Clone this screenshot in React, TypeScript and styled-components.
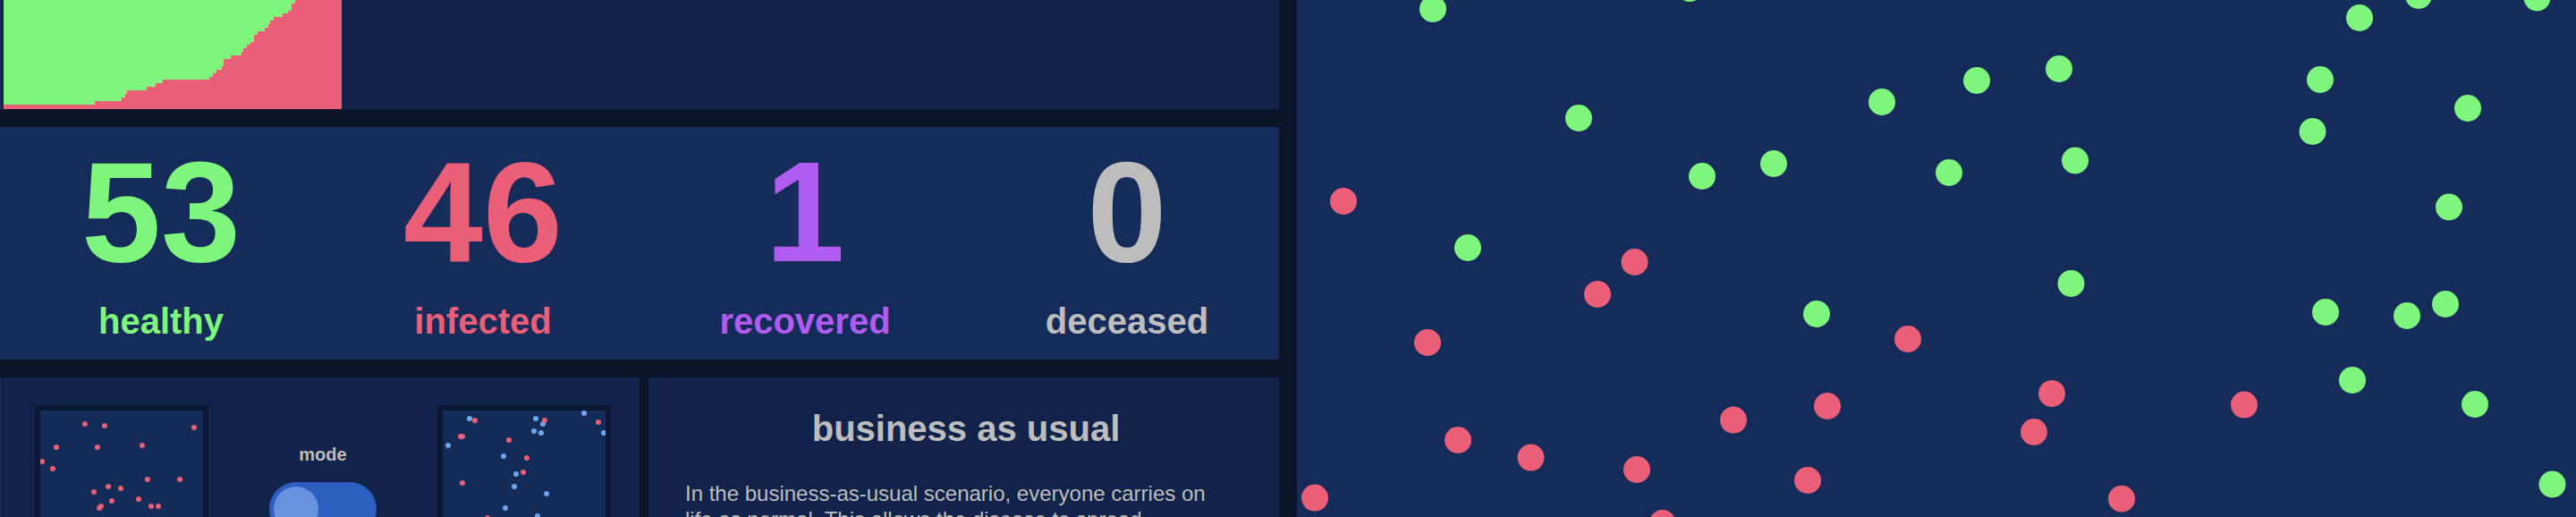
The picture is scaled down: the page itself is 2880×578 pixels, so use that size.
import React from "react";
import styled, { createGlobalStyle } from "styled-components";

const GREEN = "#7ef57d";
const RED = "#ea5e77";
const PURPLE = "#b15cf1";
const GREY = "#bdbdbd";
const BLUE = "#6ba7f1";

const GlobalStyle = createGlobalStyle`
  html, body {
    margin: 0;
    padding: 0;
    background: #0a1529;
    overflow: hidden;
  }
  body {
    font-family: "Liberation Sans", Arial, Helvetica, sans-serif;
  }
  * { box-sizing: border-box; }
`;

const Page = styled.div`
  display: grid;
  grid-template-columns: 1430px 1430px;
  column-gap: 20px;
  width: 2880px;
  height: 578px;
  overflow: hidden;
  background: #0a1529;
`;

const LeftColumn = styled.div`
  display: flex;
  flex-direction: column;
  gap: 20px;
  min-height: 0;
`;

const ChartCard = styled.section`
  flex: none;
  height: 122px;
  background: #11234a;
  display: flex;
  align-items: flex-end;
  padding-left: 3px;
  border-left: 1px solid #1a2d5c;
`;

const ChartSvg = styled.svg`
  display: block;
`;

const StatsPanel = styled.section`
  flex: none;
  height: 260px;
  background: #152b59;
  display: grid;
  grid-template-columns: repeat(4, 360px);
  padding-top: 15px;
`;

const Stat = styled.div<{ $color: string }>`
  display: flex;
  flex-direction: column;
  align-items: center;
  gap: 21.5px;
  color: ${(p) => p.$color};
`;

const StatValue = styled.div`
  font-size: 160px;
  font-weight: 700;
  line-height: 1;
`;

const StatLabel = styled.div`
  font-size: 40px;
  font-weight: 700;
  line-height: 1;
`;

const BottomRow = styled.div`
  flex: none;
  height: 400px;
  display: grid;
  grid-template-columns: 715px 705px;
  column-gap: 10px;
`;

const ModeCard = styled.section`
  background: #11234a;
  display: flex;
  align-items: flex-start;
  gap: 68px;
  padding: 31px 0 0 38px;
  border-left: 1px solid #1a2d5c;
`;

const MiniCanvas = styled.div`
  flex: none;
  width: 194px;
  height: 194px;
  border: 6px solid #0b1735;
  background: #142a57;
  overflow: hidden;
`;

const ModeControl = styled.div`
  margin-top: 45px;
  width: 120px;
  display: flex;
  flex-direction: column;
  align-items: center;
  gap: 21px;
`;

const ModeLabel = styled.div`
  font-size: 20px;
  font-weight: 700;
  line-height: 1;
  color: ${GREY};
`;

const Toggle = styled.button`
  width: 120px;
  height: 60px;
  border-radius: 30px;
  border: none;
  background: #2c5fbf;
  padding: 5px;
  display: flex;
  justify-content: flex-start;
  cursor: pointer;
`;

const Knob = styled.span`
  width: 50px;
  height: 50px;
  border-radius: 50%;
  background: #6891e0;
`;

const ScenarioCard = styled.section`
  background: #11234a;
  padding: 37px 36px 0 41px;
`;

const ScenarioTitle = styled.h2`
  margin: 0;
  text-align: center;
  font-size: 40px;
  font-weight: 700;
  line-height: 1;
  color: ${GREY};
`;

const ScenarioText = styled.p`
  margin: 38px 0 0;
  max-width: 600px;
  font-size: 24px;
  line-height: 29px;
  color: ${GREY};
`;

const Canvas = styled.section`
  background: #152b59;
  overflow: hidden;
`;

// stepped area chart (red infected below, green healthy above)
const steps: [number, number][] = [
  [3, 117], [105, 113], [135, 109], [139, 105], [141, 101], [163, 97], [173, 93],
  [181, 89], [233, 86], [237, 82], [241, 78], [247, 74], [249, 66], [257, 62],
  [269, 58], [271, 54], [275, 50], [279, 47], [283, 39], [287, 35], [295, 31],
  [299, 27], [301, 23], [305, 19], [315, 15], [321, 12], [325, 4], [329, 0],
];
const buildRedPath = () => {
  let d = `M0 122`;
  steps.forEach(([x, y], i) => {
    const x0 = x - 3;
    const x1 = (i + 1 < steps.length ? steps[i + 1][0] : 381) - 3;
    d += ` L${x0} ${y} L${x1} ${y}`;
  });
  d += ` L378 122 Z`;
  return d;
};

const AreaChart = () => (
  <ChartSvg width={378} height={122} viewBox="0 0 378 122">
    <rect x={0} y={0} width={378} height={122} fill={GREEN} />
    <path d={buildRedPath()} fill={RED} />
  </ChartSvg>
);

type Dot = [number, number];

const miniLeftRed: Dot[] = [
  [50, 15], [72, 17], [172, 19], [18, 41], [64, 41], [114, 39], [2, 57], [14, 65],
  [120, 77], [156, 77], [76, 85], [90, 87], [60, 91], [110, 99], [80, 101],
  [68, 107], [66, 109], [124, 107], [132, 107], [40, 130], [150, 140], [98, 150],
  [20, 160], [130, 168], [170, 150],
];
const miniRightBlue: Dot[] = [
  [30, 9], [104, 9], [112, 15], [158, 3], [102, 23], [110, 25], [180, 25], [6, 39],
  [68, 51], [82, 71], [80, 85], [116, 93], [70, 109], [106, 118], [140, 130],
  [30, 140], [160, 160], [60, 165],
];
const miniRightRed: Dot[] = [
  [36, 11], [114, 11], [174, 13], [20, 29], [22, 29], [74, 33], [94, 53], [90, 69],
  [22, 81], [120, 150], [50, 120],
];

const MiniDots = ({ groups }: { groups: { color: string; dots: Dot[] }[] }) => (
  <svg width={182} height={182} viewBox="0 0 182 182" style={{ display: "block" }}>
    {groups.map((g) =>
      g.dots.map(([x, y], i) => <circle key={g.color + i} cx={x} cy={y} r={3} fill={g.color} />)
    )}
  </svg>
);

const greenDots: Dot[] = [
  [152, 10], [439, -13], [1188, 20], [1254, -5], [1386.5, -2.5], [852, 77], [760, 90],
  [654, 114], [315, 132], [1144, 89], [1309, 121], [1135.5, 147], [453, 197],
  [533, 183], [729, 193], [870, 179.5], [1288, 231.5], [191, 277], [865.5, 317],
  [581, 351], [1150, 349], [1241, 353], [1284, 340], [1180, 425], [1317, 452],
  [1403.5, 541.5],
];
const redDots: Dot[] = [
  [52, 225], [377.5, 293], [336, 329], [146, 383], [683, 379], [844, 440], [593, 454],
  [1059, 452.6], [488, 469.6], [824, 483], [180, 492], [261.5, 511.6], [380, 525],
  [571, 537], [20, 556.6], [922, 557.7], [408.7, 585],
];

const stats = [
  { value: "53", label: "healthy", color: GREEN },
  { value: "46", label: "infected", color: RED },
  { value: "1", label: "recovered", color: PURPLE },
  { value: "0", label: "deceased", color: GREY },
];

export default function App() {
  return (
    <>
      <GlobalStyle />
      <Page>
        <LeftColumn>
          <ChartCard>
            <AreaChart />
          </ChartCard>
          <StatsPanel>
            {stats.map((s) => (
              <Stat key={s.label} $color={s.color}>
                <StatValue>{s.value}</StatValue>
                <StatLabel>{s.label}</StatLabel>
              </Stat>
            ))}
          </StatsPanel>
          <BottomRow>
            <ModeCard>
              <MiniCanvas>
                <MiniDots groups={[{ color: RED, dots: miniLeftRed }]} />
              </MiniCanvas>
              <ModeControl>
                <ModeLabel>mode</ModeLabel>
                <Toggle aria-label="mode">
                  <Knob />
                </Toggle>
              </ModeControl>
              <MiniCanvas>
                <MiniDots
                  groups={[
                    { color: BLUE, dots: miniRightBlue },
                    { color: RED, dots: miniRightRed },
                  ]}
                />
              </MiniCanvas>
            </ModeCard>
            <ScenarioCard>
              <ScenarioTitle>business as usual</ScenarioTitle>
              <ScenarioText>
                In the business-as-usual scenario, everyone carries on life as normal. This allows
                the disease to spread throughout the population unchecked, infecting a large share
                of people at the same time.
              </ScenarioText>
            </ScenarioCard>
          </BottomRow>
        </LeftColumn>
        <Canvas>
          <svg width={1430} height={578} viewBox="0 0 1430 578" style={{ display: "block" }}>
            {greenDots.map(([x, y], i) => (
              <circle key={"g" + i} cx={x} cy={y} r={15} fill={GREEN} />
            ))}
            {redDots.map(([x, y], i) => (
              <circle key={"r" + i} cx={x} cy={y} r={15} fill={RED} />
            ))}
          </svg>
        </Canvas>
      </Page>
    </>
  );
}
